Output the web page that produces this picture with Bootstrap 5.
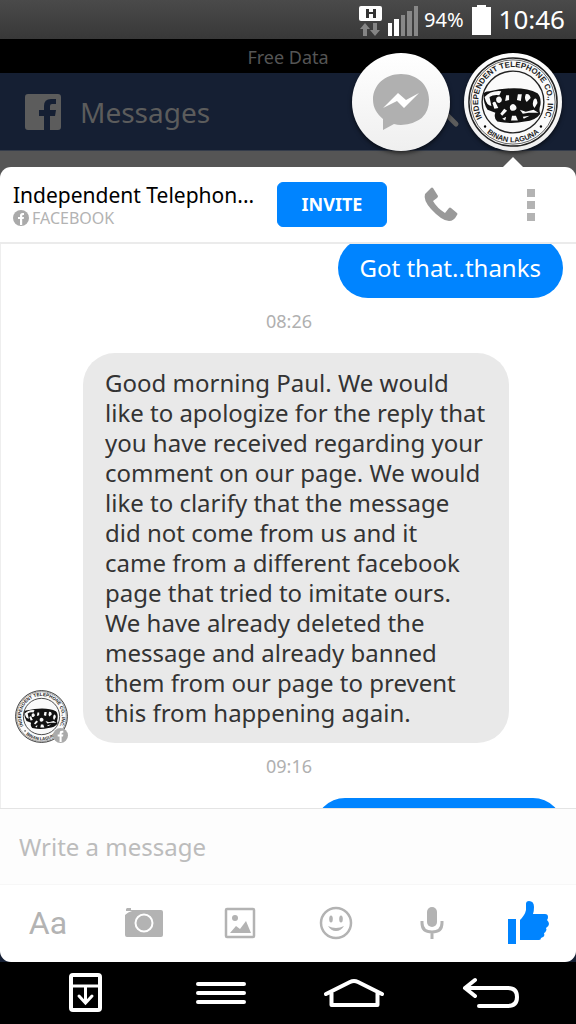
<!DOCTYPE html>
<html lang="en">
<head>
<meta charset="utf-8">
<meta name="viewport" content="width=device-width, initial-scale=1">
<title>Messages</title>
<link href="https://cdn.jsdelivr.net/npm/bootstrap@5.3.0/dist/css/bootstrap.min.css" rel="stylesheet">
<style>
body{font-family:"Noto Sans",sans-serif;height:100vh;background:#000;color:#333;overflow:hidden}
svg{display:block;flex:none}
.status{height:39px;background:linear-gradient(#4a4a4a,#383838);color:#fff;padding-right:11px}
.pct{font-size:20px;line-height:39px}
.clock{font-size:26px;line-height:39px}
.carrier{height:34px;font-size:18px;line-height:36px;color:#555}
.appbar{height:78px;background:#151f33;color:#5c5c5c;padding-left:25px;border-bottom:1px solid #343c4a}
.appbar h1{font-size:28px;line-height:36px;margin:0 0 0 19px;font-weight:400}
.heads{position:absolute;right:14px;top:-20px;gap:14px;z-index:2}
.head{width:98px;height:98px;border-radius:50%;background:linear-gradient(#fff,#efefef);box-shadow:0 2px 4px rgba(0,0,0,.6)}
.search{position:absolute;right:116px;top:21px}
.stage{background:linear-gradient(#555 50%,#151f33 50%);padding-top:16px;min-height:0}
.panel{background:#fff;border-radius:11px;position:relative;min-height:0}
.pointer{position:absolute;right:52px;top:-10px}
.panel-top{height:77px;padding:0 36px 0 13px;border-bottom:2px solid #ebebeb}
.who{width:264px;padding-bottom:2px}
.name{font-size:21px;line-height:28px;color:#000}
.src{font-size:16px;line-height:18px;color:#b3b3b3;gap:3px}
.btn-invite{--bs-btn-bg:#0084ff;--bs-btn-color:#fff;--bs-btn-border-color:#0084ff;--bs-btn-hover-bg:#0074e0;--bs-btn-hover-color:#fff;width:110px;height:45px;font-size:18px;font-weight:700;border-radius:6px;padding:0}
.chat{border-left:1px solid #eee;overflow:hidden;min-height:0;padding:0 13px 0 14px}
.bubble{font-size:24px;line-height:30px;padding:15px 22px;border-radius:32px;flex:none}
.mine{background:#0084ff;color:#fff;align-self:flex-end}
.first{margin-top:-6px}
.next{width:248px;height:60px}
.theirs{background:#e9e9e9;width:426px}
.stamp{font-size:18px;line-height:24px;color:#b0b0b0;text-align:center;flex:none;margin:11px 0 20px}
.avatar{position:relative;width:53px;margin-right:15px}
.avatar .mini{position:absolute;right:0;bottom:0}
.compose{height:76px;background:#fdfdfd;border-top:1px solid #e4e4e4;flex:none}
.compose input{border:0;background:transparent;font-size:24px;padding:0 19px;color:#333;box-shadow:none!important;height:75px}
.compose input::placeholder{color:#bcbcbc;opacity:1}
.tools{height:78px;flex:none;border-top:1px solid #f7f7f7;border-radius:0 0 11px 11px;padding-bottom:2px}
.icon-btn{border:0;background:none;padding:0;color:#b3b3b3;display:flex;align-items:center;justify-content:center}
.aa{font-family:Roboto,sans-serif;font-size:32px;line-height:40px}
.keys{height:62px;flex:none;padding:0 48px;color:#fff}
</style>
</head>
<body class="d-flex flex-column">
<svg width="0" height="0" class="position-absolute" aria-hidden="true">
  <defs>
    <path id="arcTop" d="M19.500 68A35.500 35.500 0 1 1 80.500 68"/>
    <path id="arcLow" d="M15 71.500A41 41 0 0 0 85 71.500"/>
    <symbol id="seal" viewBox="0 0 100 100">
      <circle cx="50" cy="50" r="45" fill="#fafafa" stroke="#222" stroke-width="1.500"/>
      <circle cx="50" cy="50" r="43" fill="none" stroke="#222" stroke-width=".7"/>
      <circle cx="50" cy="50" r="31.500" fill="none" stroke="#222" stroke-width="1.400"/>
      <g font-family="Liberation Sans Narrow,Liberation Sans,sans-serif" font-weight="700" fill="#222">
        <text font-size="8" text-anchor="middle"><textPath href="#arcTop" startOffset="50%">INDEPENDENT TELEPHONE CO., INC.</textPath></text>
        <text font-size="7.500" text-anchor="middle"><textPath href="#arcLow" startOffset="50%">BINAN LAGUNA</textPath></text>
      </g>
      <circle cx="21.500" cy="75" r="1.200"/><circle cx="78.500" cy="75" r="1.200"/>
      <path d="M20 44Q19 39 26 39Q38 36 51 36Q66 36 75 41Q79 45 78 53Q76 58 78 62Q73 69 62 70Q49 73 34 70Q30 66 32 61L24 58Q20 52 20 44Z" fill="#111"/>
      <g fill="#fafafa"><path d="M21 45Q27 38 38 39L36 43Q30 42 26 45L28 54Q23 54 21 45ZM33 46q3-3 5 0t-2 5q-4 0-3-5zM29 51q3-3 4 1l2 4-4 1zM43 43h3v5l-4 1zM55 42h4l-1 7-4-1zM63 42q4-1 5 4l-4 4q-3-3-1-8zM71 48q3-4 4 3l-3 5q-3-2-1-8zM47 54q3-4 6 0 2 4-3 5-4 0-3-5zM41 57l3 2-5 5-2-2zM57 58l6 2 8-2 5 3-10 0-6 1zM49 64l4 0 2 5-7 0zM60 65l7-1-6 3zM39 67l4-2-1 4z"/></g>
    </symbol>
    <symbol id="fbdot" viewBox="0 0 16 16">
      <circle cx="8" cy="8" r="8" fill="#aaa"/><path d="M7 15V9H5V7h2V5.500Q7 3 9.500 3H11v2H10Q9.200 5 9.200 6v1H11l-.3 2H9.200v6z" fill="#fff"/>
    </symbol>
  </defs>
</svg>

<div class="status d-flex justify-content-end align-items-center flex-shrink-0">
  <svg width="62" height="34" viewBox="0 0 62 34" class="me-1">
    <rect x="1" y="3" width="23" height="15" rx="2" fill="#fff"/>
    <path d="M8 6h3v3h4V6h3v9h-3v-4h-4v4H8z" fill="#333"/>
    <path d="M2 26l5-6 5 6H9v7H5v-7zM12 27l5 6 5-6h-3v-7h-4v7z" fill="#858585"/>
    <path d="M30 20h4v13h-4zM36 16h5v17h-5z" fill="#fff"/><path d="M43 12h4v21h-4zM49 8h5v25h-5zM56 3h4v30h-4z" fill="#888"/>
  </svg>
  <span class="pct">94%</span>
  <svg width="19" height="30" viewBox="0 0 19 30" class="ms-2 me-2"><path d="M5 0h9v2h5v28H0V2h5z" fill="#fff"/></svg>
  <span class="clock">10:46</span>
</div>
<div class="carrier text-center flex-shrink-0">Free Data</div>
<header class="appbar d-flex align-items-center position-relative flex-shrink-0">
  <svg width="36" height="36" viewBox="0 0 36 36"><path d="M3 0H33Q36 0 36 3V33Q36 36 33 36H25V22h5l1-6h-6v-4q0-2 2-2h4V5h-5q-7 0-7 7v4h-5v6h5v14H3Q0 36 0 33V3Q0 0 3 0Z" fill="#5c5c5c"/></svg>
  <h1>Messages</h1>
  <svg class="search" width="30" height="34" viewBox="0 0 30 34"><circle cx="9" cy="13" r="9" fill="none" stroke="#5c5c5c" stroke-width="4"/><path d="M18 22l8 8" stroke="#5c5c5c" stroke-width="5" stroke-linecap="round"/></svg>
  <div class="heads d-flex">
    <div class="head d-flex align-items-center justify-content-center">
      <svg width="56" height="56" viewBox="0 0 56 56"><path d="M28 0C12 0 0 11 0 25.500 0 34 4 40 10 45V56l11-6q3 1 7 1 28-2 28-25.500C56 11 44 0 28 0Z" fill="#b0b0b0"/><path d="M10 34L25 19l8 7 13-7L31 34l-7-7z" fill="#fff"/></svg>
    </div>
    <div class="head"><svg width="98" height="98"><use href="#seal"/></svg></div>
  </div>
</header>

<main class="stage d-flex flex-column flex-grow-1">
  <section class="panel d-flex flex-column flex-grow-1">
    <svg class="pointer" width="22" height="11" viewBox="0 0 22 11"><path d="M0 11L11 0l11 11z" fill="#fff"/></svg>
    <div class="panel-top d-flex align-items-center flex-shrink-0">
      <div class="who">
        <div class="name text-nowrap">Independent Telephon...</div>
        <div class="src d-flex align-items-center"><svg width="16" height="16"><use href="#fbdot"/></svg>FACEBOOK</div>
      </div>
      <button type="button" class="btn btn-invite">INVITE</button>
      <div class="d-flex flex-grow-1 justify-content-between align-items-center ps-3">
        <button type="button" class="icon-btn ms-3 ps-1" aria-label="Call"><svg width="36" height="36" viewBox="0 0 36 36"><path d="M2 7L8 1q1-1 2 0l5 8q0 1-1 2l-4 3q4 7 12 12l4-5q1-1 2 0l6 5q1 1 0 2-3 6-8 6Q19 34 8 22 0 13 2 7Z" fill="#999"/></svg></button>
        <button type="button" class="icon-btn" aria-label="More"><svg width="24" height="34" viewBox="0 0 24 34"><path d="M11 1h8v8h-8zM11 13h8v8h-8zM11 25h8v8h-8z" fill="#b3b3b3"/></svg></button>
      </div>
    </div>
    <div class="chat d-flex flex-column flex-grow-1">
      <div class="bubble mine first">Got that..thanks</div>
      <div class="stamp">08:26</div>
      <div class="d-flex align-items-end flex-shrink-0">
        <div class="avatar"><svg width="53" height="53" viewBox="4 4 92 92"><use href="#seal" width="100" height="100"/></svg><svg class="mini" width="15" height="15"><use href="#fbdot"/></svg></div>
        <div class="bubble theirs">Good morning Paul. We would like to apologize for the reply that you have received regarding your comment on our page. We would like to clarify that the message did not come from us and it<br>came from a different facebook page that tried to imitate ours.<br>We have already deleted the message and already banned them from our page to prevent this from happening again.</div>
      </div>
      <div class="stamp">09:16</div>
      <div class="bubble mine next"></div>
    </div>
    <div class="compose"><input type="text" class="form-control" placeholder="Write a message" aria-label="Write a message"></div>
    <div class="tools row row-cols-6 g-0 align-items-center">
      <button type="button" class="icon-btn aa">Aa</button>
      <button type="button" class="icon-btn" aria-label="Camera"><svg width="38" height="30" viewBox="0 0 38 30"><path d="M2 0h4v2h30q2 0 2 2v23q0 2-2 2H2q-2 0-2-2V7q3-3 7-4H1V1z" fill="#b3b3b3"/><circle cx="19" cy="15" r="8.500" fill="#b3b3b3" stroke="#fff" stroke-width="2"/></svg></button>
      <button type="button" class="icon-btn" aria-label="Photos"><svg width="32" height="32" viewBox="0 0 32 32"><rect x="2" y="2" width="28" height="28" rx="1" fill="none" stroke="#b3b3b3" stroke-width="2.500"/><circle cx="11" cy="11" r="3" fill="#b3b3b3"/><path d="M6 26l6-7 4 3 6-8 5 12z" fill="#b3b3b3"/></svg></button>
      <button type="button" class="icon-btn" aria-label="Emoji"><svg width="34" height="34" viewBox="0 0 34 34"><circle cx="17" cy="17" r="15" fill="none" stroke="#b3b3b3" stroke-width="2.500"/><ellipse cx="12" cy="13" rx="1.800" ry="3.500" fill="#b3b3b3"/><ellipse cx="22" cy="13" rx="1.800" ry="3.500" fill="#b3b3b3"/><path d="M9 20q8 4 16 0-3 5-8 5t-8-5z" fill="#b3b3b3"/></svg></button>
      <button type="button" class="icon-btn" aria-label="Record"><svg width="24" height="34" viewBox="0 0 24 34"><rect x="7" y="1" width="10" height="20" rx="5" fill="#b3b3b3"/><path d="M2 15v2q0 9 10 9t10-9v-2M12 26v7" fill="none" stroke="#b3b3b3" stroke-width="3"/></svg></button>
      <button type="button" class="icon-btn" aria-label="Like"><svg width="41" height="43" viewBox="0 0 41 43"><path d="M0 18h8v25H0zM12 19q5-5 6-10V3q0-3 3-3 5 0 5 6 0 4-1 7h12q3 0 3 3 0 2-1 3 2 2 2 4t-3 4q1 2 0 3-1 2-2 2 1 3-1 4l-2 1q0 2-2 2H12z" fill="#0084ff"/></svg></button>
    </div>
  </section>
</main>
<nav class="keys d-flex justify-content-between align-items-center" aria-label="System">
  <button type="button" class="icon-btn" aria-label="Pull down"><svg width="74" height="40" viewBox="0 0 74 40"><g fill="none" stroke="#fff"><rect x="23" y="2" width="29" height="35" rx="2" stroke-width="4"/><path d="M23 13h29M37.500 13v17" stroke-width="3"/><path d="M31 23l6.500 7L44 23" stroke-width="3" stroke-linecap="round"/></g></svg></button>
  <button type="button" class="icon-btn ms-1" aria-label="Menu"><svg width="52" height="26" viewBox="0 0 52 26"><path d="M3 4h46M3 13h46M3 22h46" stroke="#fff" stroke-width="4" stroke-linecap="round"/></svg></button>
  <button type="button" class="icon-btn ms-2" aria-label="Home"><svg width="62" height="30" viewBox="0 0 62 30"><path d="M3 16L27 4q4-2 8 0l24 12M8.500 15v12h46V15" fill="none" stroke="#fff" stroke-width="4" stroke-linecap="round" stroke-linejoin="round"/></svg></button>
  <button type="button" class="icon-btn" aria-label="Back"><svg width="74" height="32" viewBox="0 0 74 32"><path d="M21 3L11 11l10 8M11 11h43q9 0 9 9t-9 9H25" fill="none" stroke="#fff" stroke-width="4" stroke-linecap="round" stroke-linejoin="round"/></svg></button>
</nav>
<script src="https://cdn.jsdelivr.net/npm/bootstrap@5.3.0/dist/js/bootstrap.bundle.min.js"></script>
</body>
</html>
